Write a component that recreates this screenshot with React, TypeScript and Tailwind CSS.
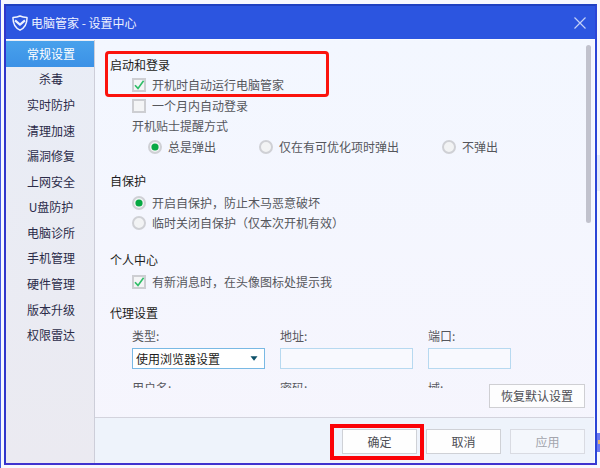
import React, { useState } from 'react';

const NAV_ITEMS = [
  '常规设置',
  '杀毒',
  '实时防护',
  '清理加速',
  '漏洞修复',
  '上网安全',
  'U盘防护',
  '电脑诊所',
  '手机管理',
  '硬件管理',
  '版本升级',
  '权限雷达',
];

interface ToggleProps {
  label: string;
  checked: boolean;
  onChange: () => void;
}

const CheckRow: React.FC<ToggleProps> = ({ label, checked, onChange }) => (
  <label className="flex h-5 items-center gap-1.5 pl-[22px]">
    <span className="relative flex">
      <input
        type="checkbox"
        checked={checked}
        onChange={onChange}
        className="size-3.5 appearance-none border-2 border-[#cdced2] bg-[#f4f5f6]"
      />
      {checked && (
        <svg viewBox="0 0 14 14" className="pointer-events-none absolute inset-0 size-3.5" fill="none">
          <path d="M3 7.2 L6 10.4 L11.6 2.8" stroke="#2fbd68" strokeWidth="1.6" />
        </svg>
      )}
    </span>
    {label}
  </label>
);

const Radio: React.FC<ToggleProps & { name: string }> = ({ label, name, checked, onChange }) => (
  <label className="flex h-5 items-center gap-1.5 whitespace-nowrap">
    <span className="relative flex">
      <input
        type="radio"
        name={name}
        checked={checked}
        onChange={onChange}
        className="size-3.5 appearance-none rounded-full border-2 border-[#cfd0d5] bg-[#f2f3f4]"
      />
      {checked && (
        <svg viewBox="0 0 14 14" className="pointer-events-none absolute inset-0 size-3.5">
          <circle cx="7" cy="7" r="3.6" fill="#06a843" />
        </svg>
      )}
    </span>
    {label}
  </label>
);

const SectionTitle: React.FC<{ children: React.ReactNode }> = ({ children }) => (
  <h2 className="text-[#1c1c20]">{children}</h2>
);

const App: React.FC = () => {
  const [active, setActive] = useState('常规设置');
  const [autoRun, setAutoRun] = useState(true);
  const [autoLogin, setAutoLogin] = useState(false);
  const [notify, setNotify] = useState(true);
  const [tips, setTips] = useState('总是弹出');
  const [protect, setProtect] = useState(true);
  const [address, setAddress] = useState('');
  const [port, setPort] = useState('');

  return (
    <div className="relative flex h-screen overflow-hidden border-l border-[#4257e2] bg-[#f7f8fe] pt-1 pr-[3px] pb-[3px] pl-[3px] font-['Noto_Sans_CJK_SC','Liberation_Sans',sans-serif] text-[12px] leading-5 text-[#55565c]">
      {/* Desktop behind the window */}
      <div className="absolute right-0 bottom-4 h-[19px] w-1 bg-[#6b7af0]" />
      <div className="absolute right-0 bottom-6 h-1 w-0.5 bg-[#e9b56a]" />
      <div className="absolute top-[155px] right-0 h-9 w-1 bg-[#e4eafb]" />

      <div className="z-10 flex min-w-0 flex-1 flex-col border-2 border-t-[#1f40c0] border-r-[#2b45d6] border-b-[#3f33cf] border-l-[#3036cb]">
        {/* Title bar */}
        <header className="flex h-[33px] shrink-0 items-center justify-between bg-[#2c55e0] pr-[9px] pl-[6px] text-white">
          <div className="flex items-center gap-[3px]">
            <svg viewBox="0 0 16 16" className="size-4" fill="none">
              <path
                d="M8 1 C6 2 3.6 2.4 1 2.5 C0.8 8.6 3 12.6 8 15.2 C13 12.6 15.2 8.6 15 2.5 C12.4 2.4 10 2 8 1 Z"
                stroke="#eef2ff"
                strokeWidth="1.5"
                strokeLinejoin="round"
              />
              <path d="M3 5.4 L8 9.6 L13 5.4" stroke="#eef2ff" strokeWidth="2.2" strokeLinejoin="round" />
            </svg>
            <h1 className="text-[#eef2ff]">电脑管家 - 设置中心</h1>
          </div>
          <button type="button" aria-label="关闭" className="flex">
            <svg viewBox="0 0 12 12" className="size-3" fill="none">
              <path d="M0.5 0.5 L11.5 11.5 M11.5 0.5 L0.5 11.5" stroke="#c3d0f8" strokeWidth="1.2" />
            </svg>
          </button>
        </header>

        <div className="flex min-h-0 flex-1 border-t border-r border-[#fafbff]">
          {/* Sidebar */}
          <nav className="w-[89px] shrink-0 border-r border-[#cdced9] bg-linear-to-b from-[#e9edf6] to-[#ebeaf1]">
            <ul className="grid h-[308px] grid-rows-12 pt-px">
              {NAV_ITEMS.map(item => (
                <li key={item} className="flex min-h-0">
                  <button
                    type="button"
                    onClick={() => setActive(item)}
                    className={`flex-1 pl-0.5 ${
                      item === active
                        ? 'bg-linear-to-b from-[#48a1ec] to-[#3b91e6] text-white'
                        : 'text-[#2b2b49]'
                    }`}
                  >
                    {item}
                  </button>
                </li>
              ))}
            </ul>
          </nav>

          <div className="flex min-w-0 flex-1 flex-col bg-linear-to-b from-[#f3f7ff] to-[#f6f5fd]">
            <div className="flex min-h-0 flex-1 overflow-hidden">
              <main className="min-w-0 flex-1 pt-[15px] pl-[15px]">
                <section>
                  <div className="relative">
                    <SectionTitle>启动和登录</SectionTitle>
                    <CheckRow label="开机时自动运行电脑管家" checked={autoRun} onChange={() => setAutoRun(!autoRun)} />
                    <div className="pointer-events-none absolute -top-1 -bottom-0.5 -left-[5px] w-56 rounded-sm border-3 border-[#fb130d]" />
                  </div>
                  <div className="pt-px">
                    <CheckRow label="一个月内自动登录" checked={autoLogin} onChange={() => setAutoLogin(!autoLogin)} />
                  </div>
                  <p className="pl-[22px]">开机贴士提醒方式</p>
                  <div className="flex gap-[43px] pt-px pl-[38px]">
                    {['总是弹出', '仅在有可优化项时弹出', '不弹出'].map(option => (
                      <Radio
                        key={option}
                        name="tips"
                        label={option}
                        checked={tips === option}
                        onChange={() => setTips(option)}
                      />
                    ))}
                  </div>
                </section>

                <section className="pt-3.5">
                  <SectionTitle>自保护</SectionTitle>
                  <div className="pt-0.5 pl-[22px]">
                    <Radio
                      name="protect"
                      label="开启自保护，防止木马恶意破坏"
                      checked={protect}
                      onChange={() => setProtect(true)}
                    />
                    <Radio
                      name="protect"
                      label="临时关闭自保护（仅本次开机有效）"
                      checked={!protect}
                      onChange={() => setProtect(false)}
                    />
                  </div>
                </section>

                <section className="pt-[17px]">
                  <SectionTitle>个人中心</SectionTitle>
                  <div className="pt-0.5">
                    <CheckRow
                      label="有新消息时，在头像图标处提示我"
                      checked={notify}
                      onChange={() => setNotify(!notify)}
                    />
                  </div>
                </section>

                <section className="pt-[11px]">
                  <SectionTitle>代理设置</SectionTitle>
                  <div className="grid grid-cols-[133px_133px_83px] gap-x-[15px] pt-[3px] pl-[22px]">
                    <label htmlFor="proxy-type">类型:</label>
                    <label htmlFor="proxy-address">地址:</label>
                    <label htmlFor="proxy-port">端口:</label>
                    <div className="relative mt-0.5 flex">
                      <select
                        id="proxy-type"
                        className="h-[21px] w-full appearance-none border border-[#79b9e4] bg-white pl-[3px] text-[12px] leading-[19px] text-[#1c1c20]"
                      >
                        <option>使用浏览器设置</option>
                        <option>不使用代理</option>
                      </select>
                      <svg viewBox="0 0 8 5" className="pointer-events-none absolute top-2 right-[7px] h-[5px] w-2">
                        <path d="M0.5 0.3 H7.5 L4 4.7 Z" fill="#0d5168" />
                      </svg>
                    </div>
                    <input
                      id="proxy-address"
                      type="text"
                      value={address}
                      onChange={e => setAddress(e.target.value)}
                      className="mt-0.5 h-[21px] w-full border border-[#b7d9f0] bg-[#f8f9fe] px-1"
                    />
                    <input
                      id="proxy-port"
                      type="text"
                      value={port}
                      onChange={e => setPort(e.target.value)}
                      className="mt-0.5 h-[21px] w-full border border-[#b7d9f0] bg-[#f8f9fe] px-1"
                    />
                    <label htmlFor="proxy-user" className="mt-[9px]">用户名:</label>
                    <label htmlFor="proxy-password" className="mt-[9px]">密码:</label>
                    <label htmlFor="proxy-domain" className="mt-[9px]">域:</label>
                    <input id="proxy-user" type="text" className="mt-0.5 h-[21px] border border-[#b7d9f0]" />
                    <input id="proxy-password" type="password" className="mt-0.5 h-[21px] border border-[#b7d9f0]" />
                    <input id="proxy-domain" type="text" className="mt-0.5 h-[21px] border border-[#b7d9f0]" />
                  </div>
                </section>
              </main>
              {/* Scroll thumb */}
              <div className="w-2 shrink-0 pt-[5px]">
                <div className="h-[178px] w-[5px] rounded-full bg-[#c1c2cd]" />
              </div>
            </div>

            <div className="-mt-1 flex shrink-0 justify-end pr-[9px] pb-[9px]">
              <button type="button" className="z-10 h-6 w-24 border border-[#cfcfd3] bg-[#fdfdfe] text-[#4c4d53]">
                恢复默认设置
              </button>
            </div>

            {/* Dialog actions */}
            <footer className="flex shrink-0 justify-end gap-[9px] border-t border-[#d3d3dd] bg-[#eef3fb] pt-[11px] pr-[9px] pb-[9px]">
              <div className="relative">
                <button type="button" className="block h-[25px] w-[75px] border border-[#cfd1d6] bg-[#fefefe] text-[#4c4d53]">
                  确定
                </button>
                <div className="pointer-events-none absolute -top-[5px] -right-[7px] -bottom-1.5 -left-3 border-4 border-[#fb0207]" />
              </div>
              <button type="button" className="block h-[25px] w-[75px] border border-[#cfd1d6] bg-[#fefefe] text-[#4c4d53]">
                取消
              </button>
              <button type="button" disabled className="block h-[25px] w-[75px] border border-[#d9dbe2] bg-[#f4f7fc] text-[#a3a5ad]">
                应用
              </button>
            </footer>
          </div>
        </div>
      </div>
    </div>
  );
};

export default App;
